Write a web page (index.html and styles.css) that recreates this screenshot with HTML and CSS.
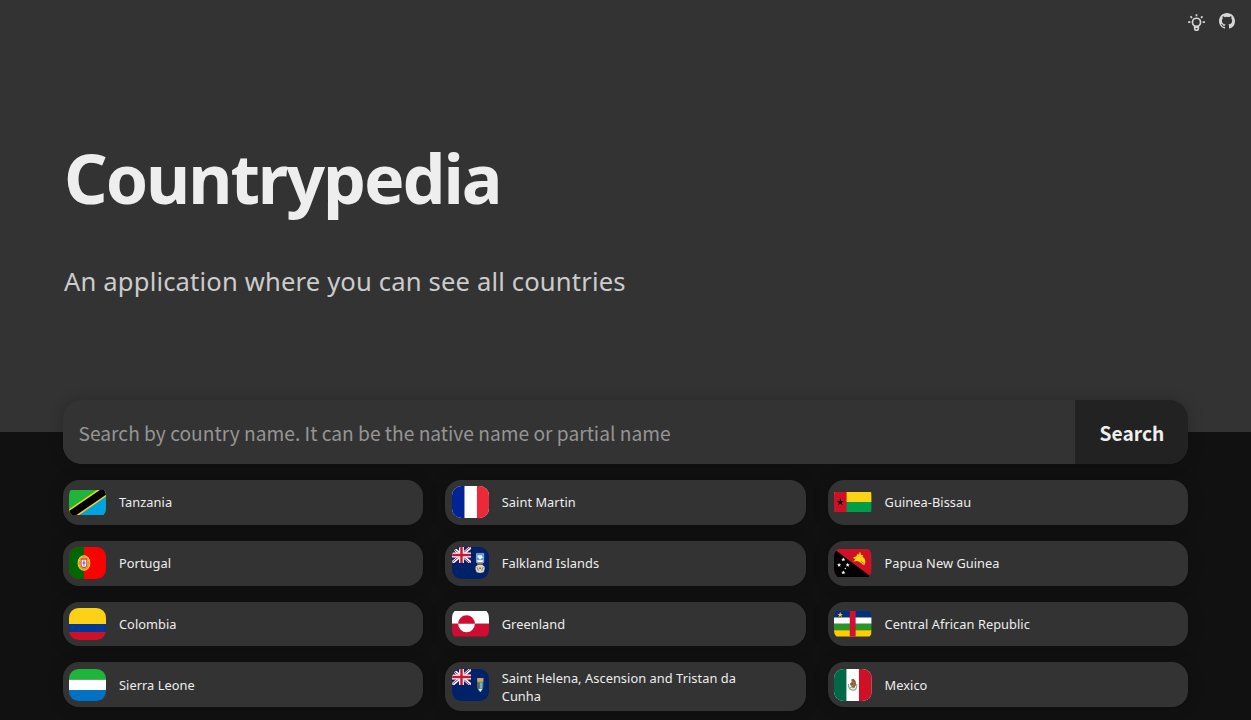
FILE: index.html
```html
<!DOCTYPE html>
<html lang="en">
<head>
<meta charset="utf-8">
<title>Countrypedia</title>
<link rel="stylesheet" href="styles.css">
</head>
<body>
<svg class="defs" width="0" height="0">
  <defs>
    <symbol id="jack" viewBox="0 0 20 16" preserveAspectRatio="none">
      <path fill="#00247d" d="M0 0h20v16H0z"/>
      <path stroke="#fff" stroke-width="3" d="M0 0l20 16M20 0L0 16"/>
      <path stroke="#cf142b" stroke-width="1" d="M0 .5l20 16M20-.5L0 15.5"/>
      <path stroke="#fff" stroke-width="5" d="M10 0v16M0 8h20"/>
      <path stroke="#cf142b" stroke-width="2.6" d="M10 0v16M0 8h20"/>
    </symbol>
  </defs>
</svg>
<header class="hero">
  <nav class="tools">
    <svg class="bulb" viewBox="0 0 16 16" fill="none" stroke="#d6d6d6" stroke-width="1.6">
      <path d="M8 .2v2M.1 7.6h2.1M13.8 7.6h2.1M2.3 2.2l1.5 1.5M13.7 2.2l-1.5 1.5"/>
      <circle cx="8" cy="7.8" r="3.8"/>
      <path d="M6.3 11.3v2.6q0 1.4 1.7 1.4t1.7-1.4v-2.6M6.3 12.4h3.4"/>
    </svg>
    <svg class="github" viewBox="0 0 16 16" fill="#d6d6d6"><path d="M8 0C3.58 0 0 3.58 0 8c0 3.54 2.29 6.53 5.47 7.59.4.07.55-.17.55-.38 0-.19-.01-.82-.01-1.49-2.01.37-2.53-.49-2.69-.94-.09-.23-.48-.94-.82-1.13-.28-.15-.68-.52-.01-.53.63-.01 1.08.58 1.23.82.72 1.21 1.87.87 2.33.66.07-.52.28-.87.51-1.07-1.78-.2-3.64-.89-3.64-3.95 0-.87.31-1.59.82-2.15-.08-.2-.36-1.02.08-2.12 0 0 .67-.21 2.2.82a7.6 7.6 0 0 1 4 0c1.53-1.04 2.2-.82 2.2-.82.44 1.1.16 1.92.08 2.12.51.56.82 1.27.82 2.15 0 3.07-1.87 3.75-3.65 3.95.29.25.54.73.54 1.48 0 1.07-.01 1.93-.01 2.2 0 .21.15.46.55.38A8.01 8.01 0 0 0 16 8c0-4.42-3.58-8-8-8z"/></svg>
  </nav>
  <h1 class="title">Countrypedia</h1>
  <p class="subtitle">An application where you can see all countries</p>
</header>
<main class="content">
  <form class="search">
    <input class="search-input" type="text" placeholder="Search by country name. It can be the native name or partial name">
    <button class="search-button" type="button">Search</button>
  </form>
  <section class="grid">
    <article class="card"><div class="flag"><svg class="h25" viewBox="0 0 36 24" preserveAspectRatio="none"><path fill="#1eb53a" d="M0 0h36v24H0z"/><path fill="#00a3dd" d="M36 0v24H0z"/><path stroke="#fcd116" stroke-width="9.9" d="M-6 28L42-4"/><path stroke="#000" stroke-width="7" d="M-6 28L42-4"/></svg></div><span class="name">Tanzania</span></article>
    <article class="card"><div class="flag"><svg viewBox="0 0 3 2" preserveAspectRatio="none"><path fill="#fff" d="M0 0h3v2H0z"/><path fill="#002395" d="M0 0h1v2H0z"/><path fill="#ed2939" d="M2 0h1v2H2z"/></svg></div><span class="name">Saint Martin</span></article>
    <article class="card"><div class="flag"><svg class="h20" viewBox="0 0 38 20" preserveAspectRatio="none"><path fill="#fcd116" d="M0 0h38v10H0z"/><path fill="#009e49" d="M0 10h38v10H0z"/><path fill="#ce1126" d="M0 0h12.8v20H0z"/><path d="M6.4 6.2l.9 2.7h2.8l-2.3 1.6.9 2.7-2.3-1.7-2.3 1.7.9-2.7-2.3-1.6h2.8z"/></svg></div><span class="name">Guinea-Bissau</span></article>

    <article class="card"><div class="flag"><svg viewBox="0 0 37 32" preserveAspectRatio="none"><path fill="#f00" d="M0 0h37v32H0z"/><path fill="#060" d="M0 0h14.8v32H0z"/><ellipse cx="14.8" cy="16" rx="5.8" ry="7.3" fill="#b8a020" stroke="#e8dc20" stroke-width="1"/><path stroke="#ef0" stroke-width=".6" d="M9.5 13l11 6M9.5 19l11-6"/><path fill="#f22" stroke="#fbb" stroke-width=".6" d="M11.2 11h7.2v6.5q0 4-3.6 4t-3.6-4z"/><path fill="#fff" d="M12.5 12.7h4.6v5q0 2.2-2.3 2.2t-2.3-2.2z"/><path stroke="#3856a5" stroke-width=".9" d="M14.8 13.2v5.6M13.2 16h3.2"/></svg></div><span class="name">Portugal</span></article>
    <article class="card"><div class="flag"><svg viewBox="0 0 37 32" preserveAspectRatio="none"><path fill="#012169" d="M0 0h37v32H0z"/><use href="#jack" width="18.8" height="16"/><path fill="#5196ed" stroke="#b5d4ef" stroke-width=".6" d="M24.2 6.4h7.2v9l-3.6 1.8-3.6-1.8z"/><path fill="#fff" d="M25.3 8.3h4.4l.8 2.6h-1.3v1.3h-2.6v-1.5h-1.3zM24.6 13.3h6.4l-1 2h-4.4z"/><path fill="#ddd9cc" d="M23.4 19.5q-1 3 1 5.8l3.4.6 3.4-.6q2-2.8 1-5.8l-2.2-1.5h-4.4z"/><path fill="#a66b24" d="M25.4 15.7h4.7l.6 2h-6z"/><path stroke="#a9853f" stroke-width="1" d="M24.6 20l1.8 3.7M31 20l-1.8 3.7"/><path fill="#4170b8" d="M27 20.5h1.6v1.5H27z"/></svg></div><span class="name">Falkland Islands</span></article>
    <article class="card"><div class="flag"><svg class="h28" viewBox="0 0 38 28" preserveAspectRatio="none"><path fill="#ce1126" d="M0 0h38v28H0z"/><path d="M0 0l38 28H0z"/><g fill="#fff"><path id="star" d="M9.5 8.4l.6 1.4 1.5.1-1.2.9.4 1.5-1.3-.8-1.3.8.4-1.5-1.2-.9 1.5-.1z"/><use href="#star" x="-4.3" y="5.4"/><use href="#star" x="4.4" y="5.4"/><use href="#star" y="13"/><circle cx="11.5" cy="19.5" r=".65"/></g><path fill="#fcd116" d="M19.2 8.8l3.4-1.5 1.8-3 .6 1.8 1.5-3.5 1 3.5 2-.2-.4 2 1.7 1.2 1.2 3.7-1.2 3.5-2-1-1.2-1.3-2.3-1.6-2.6-.3-3.2.7 2.2-2.2z"/><path fill="none" stroke="#ce1126" stroke-width=".6" d="M27.5 12l3 2.8"/></svg></div><span class="name">Papua New Guinea</span></article>

    <article class="card"><div class="flag"><svg viewBox="0 0 4 4" preserveAspectRatio="none"><path fill="#fcd116" d="M0 0h4v2H0z"/><path fill="#003893" d="M0 2h4v1H0z"/><path fill="#ce1126" d="M0 3h4v1H0z"/></svg></div><span class="name">Colombia</span></article>
    <article class="card"><div class="flag"><svg class="h25" viewBox="0 0 36 24" preserveAspectRatio="none"><path fill="#fff" d="M0 0h36v12H0z"/><path fill="#d00c33" d="M0 12h36v12H0z"/><circle cx="14" cy="12" r="8" fill="#fff"/><path fill="#d00c33" d="M6 12a8 8 0 0 1 16 0z"/></svg></div><span class="name">Greenland</span></article>
    <article class="card"><div class="flag"><svg class="h25" viewBox="0 0 38 24" preserveAspectRatio="none"><path fill="#003082" d="M0 0h38v6H0z"/><path fill="#fff" d="M0 6h38v6H0z"/><path fill="#289728" d="M0 12h38v6H0z"/><path fill="#ffce00" d="M0 18h38v6H0z"/><path fill="#d21034" d="M16 0h6v24h-6z"/><path fill="#ffce00" d="M6.3.8l.7 1.9h2L7.4 3.9 8 5.8 6.3 4.7 4.6 5.8l.6-1.9-1.6-1.2h2z"/></svg></div><span class="name">Central African Republic</span></article>

    <article class="card"><div class="flag"><svg viewBox="0 0 3 3" preserveAspectRatio="none"><path fill="#1eb53a" d="M0 0h3v1H0z"/><path fill="#fff" d="M0 1h3v1H0z"/><path fill="#0072c6" d="M0 2h3v1H0z"/></svg></div><span class="name">Sierra Leone</span></article>
    <article class="card"><div class="flag"><svg viewBox="0 0 37 32" preserveAspectRatio="none"><path fill="#012169" d="M0 0h37v32H0z"/><use href="#jack" width="18.8" height="16"/><path fill="#478b9d" d="M25 9h6v8q0 4-3 6-3-2-3-6z"/><path fill="#c9a85c" d="M25 9h6v3.8h-6z"/><path fill="#805c38" d="M25 14h2.3v4.5L25.8 20Q25 18 25 15z"/><path stroke="#ddd" stroke-width=".8" d="M28.7 13.5v6"/><path fill="#eef" d="M26.3 20h3.5L28 23z"/></svg></div><span class="name">Saint Helena, Ascension and Tristan da Cunha</span></article>
    <article class="card"><div class="flag"><svg viewBox="0 0 37 32" preserveAspectRatio="none"><path fill="#fff" d="M0 0h37v32H0z"/><path fill="#006847" d="M0 0h12.3v32H0z"/><path fill="#ce1126" d="M24.7 0H37v32H24.7z"/><path fill="none" stroke="#8ca77a" stroke-width="1.1" d="M14.4 15q-.3 5.5 4.1 6.1t4.1-6.1"/><path fill="#8a5a34" d="M17 10.5l2.2-.8 2.2 2.2.5 4.2-2.2 3-2.6-1.6-1.4-2.7 1.9-1.8z"/><path fill="none" stroke="#c59262" stroke-width=".7" d="M18.3 12.3l2.3 4.2M16.5 16.2l3 .7"/><path stroke="#53a9a3" stroke-width="1.1" d="M16 18.8h5"/></svg></div><span class="name">Mexico</span></article>
  </section>
</main>
</body>
</html>
```
FILE: styles.css
```css
* { box-sizing: border-box; }
html, body { height: 100%; }
body {
  margin: 0;
  overflow: hidden;
  background: #111;
  color: #eee;
  font-family: "Noto Sans", sans-serif;
}
.defs { display: block; }
.hero {
  height: 432px;
  padding: 0 5%;
  background: #333;
}
.tools {
  display: flex;
  justify-content: flex-end;
  gap: 14px;
  height: 48px;
  padding-top: 13px;
  margin-right: -47px;
}
.tools svg { width: 16px; height: 16px; }
.tools .bulb { width: 17px; height: 17px; margin-top: 1px; }
.title {
  margin: 82px 0 0 1.5px;
  font-size: 68px;
  line-height: 96px;
  font-weight: 700;
  letter-spacing: -2.05px;
}
.subtitle {
  margin: 38px 0 0 1.5px;
  color: #ccc;
  font-size: 25.6px;
  line-height: 36px;
  letter-spacing: .155px;
}
.content {
  width: 90%;
  margin: -32px auto 0;
}
.search {
  display: flex;
  height: 64px;
  overflow: hidden;
  border-radius: 19px;
  background: #333;
  box-shadow: 0 0 16px rgba(0, 0, 0, .2);
}
.search-input {
  flex: 1;
  min-width: 0;
  padding: 2px 16px 0;
  border: 0;
  background: #333;
  color: #eee;
  font: 19.2px "Noto Sans CJK JP", sans-serif;
}
.search-input::placeholder { color: #959595; }
.search-button {
  width: 113px;
  padding: 2px 0 0;
  border: 0;
  background: #222;
  color: #eee;
  font: 700 19.2px "Noto Sans CJK JP", sans-serif;
}
.grid {
  display: grid;
  grid-template-columns: repeat(3, 1fr);
  align-items: start;
  gap: 16px 2%;
  margin-top: 16px;
}
.card {
  display: flex;
  gap: 12.8px;
  padding: 6.4px;
  border-radius: 16px;
  background: #333;
  box-shadow: 0 0 16px rgba(0, 0, 0, .2);
}
.flag {
  display: flex;
  align-items: center;
  flex: none;
  width: 37.4px;
  height: 32px;
  margin-left: -.2px;
  overflow: hidden;
  border-radius: 9.6px;
}
.flag svg { display: block; width: 100%; height: 100%; }
.flag .h20 { height: 20px; }
.flag .h25 { height: 25.6px; }
.flag .h28 { height: 28px; }
.name {
  align-self: center;
  max-width: 240px;
  margin: 1px 0 -1px;
  font-size: 12.8px;
  line-height: 17.9px;
  letter-spacing: .06px;
}
```
